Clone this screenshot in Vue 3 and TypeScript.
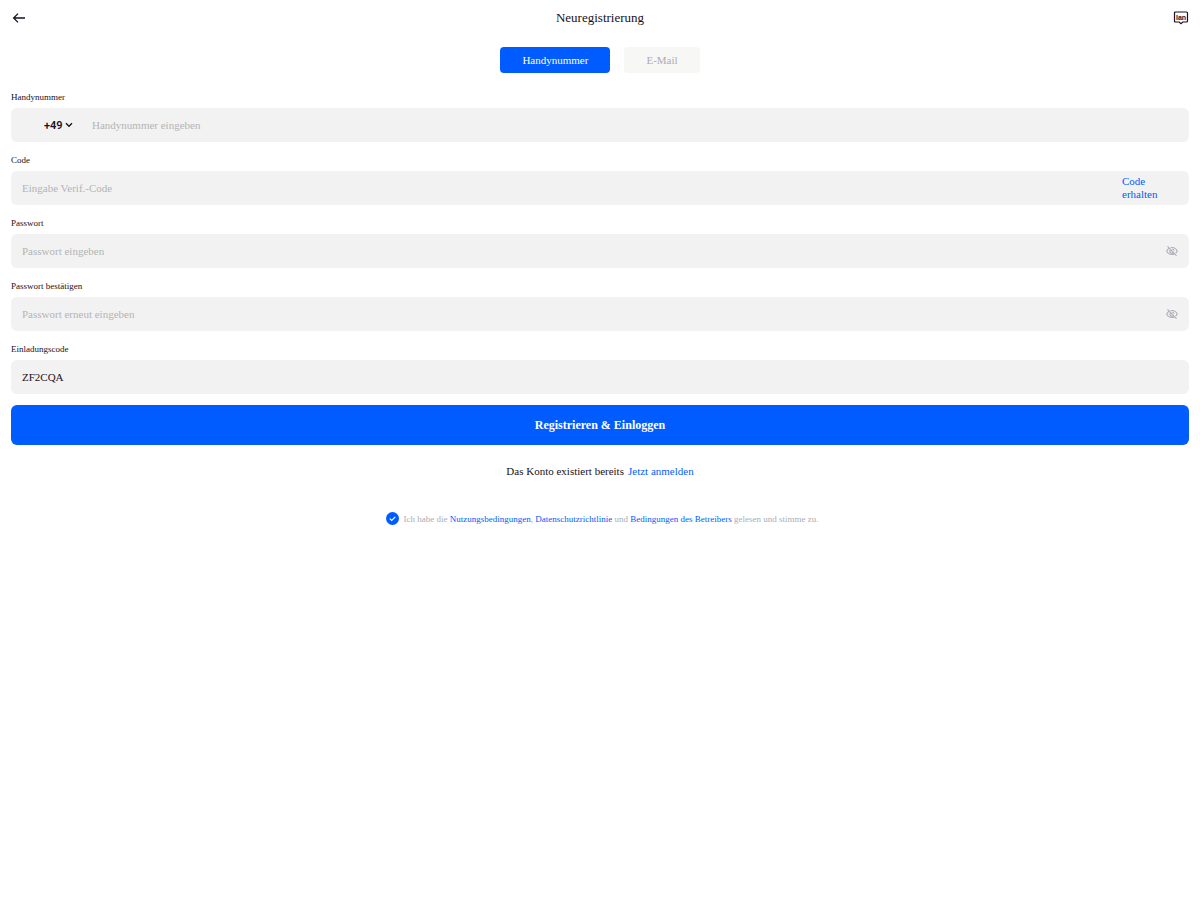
<script setup lang="ts">
import { ref } from 'vue'

const method = ref<'phone' | 'mail'>('phone')
const dialCode = ref('+49')
const phone = ref('')
const code = ref('')
const invite = ref('ZF2CQA')
const accepted = ref(true)

interface PasswordField {
  id: string
  label: string
  placeholder: string
  value: string
  visible: boolean
}

const passwords = ref<PasswordField[]>([
  { id: 'password', label: 'Passwort', placeholder: 'Passwort eingeben', value: '', visible: false },
  { id: 'confirm', label: 'Passwort bestätigen', placeholder: 'Passwort erneut eingeben', value: '', visible: false },
])
</script>

<template>
  <div class="page">
    <header class="bar">
      <button class="icon-button" type="button" aria-label="Zurück">
        <svg width="14" height="14" viewBox="0 0 14 14" fill="none" stroke="#1b1020" stroke-width="1.3">
          <path d="M13 7H1.8M6 2.6 1.6 7 6 11.4" />
        </svg>
      </button>
      <h1 class="title">Neuregistrierung</h1>
      <button class="icon-button" type="button" aria-label="Sprache">
        <svg width="16" height="14" viewBox="0 0 16 14">
          <path d="M2.500 1h11q1 0 1 1v8q0 1-1 1H9.800L8 12.700 6.200 11H2.500q-1 0-1-1V2q0-1 1-1z" fill="none" stroke="#1b1020" stroke-width="1.200" />
          <text class="glyph" x="8" y="8.600" text-anchor="middle">lan</text>
        </svg>
      </button>
    </header>

    <nav class="tabs">
      <button class="tab" :class="{ active: method === 'phone' }" type="button" @click="method = 'phone'">Handynummer</button>
      <button class="tab" :class="{ active: method === 'mail' }" type="button" @click="method = 'mail'">E-Mail</button>
    </nav>

    <form class="form" @submit.prevent>
      <div class="field">
        <label class="label" for="phone">Handynummer</label>
        <div class="box phone-box">
          <div class="dial">
            <select v-model="dialCode" class="dial-select" aria-label="Ländervorwahl">
              <option>+49</option>
            </select>
            <svg class="chevron" width="8" height="6" viewBox="0 0 8 6" fill="none" stroke="#1b1020" stroke-width="1.3">
              <path d="M1 1.3 4 4.3 7 1.3" />
            </svg>
          </div>
          <input id="phone" v-model="phone" class="input" type="tel" placeholder="Handynummer eingeben" />
        </div>
      </div>

      <div class="field">
        <label class="label" for="code">Code</label>
        <div class="box">
          <input id="code" v-model="code" class="input" type="text" placeholder="Eingabe Verif.-Code" />
          <button class="send" type="button">Code erhalten</button>
        </div>
      </div>

      <div v-for="field in passwords" :key="field.id" class="field">
        <label class="label" :for="field.id">{{ field.label }}</label>
        <div class="box">
          <input :id="field.id" v-model="field.value" class="input" :type="field.visible ? 'text' : 'password'" :placeholder="field.placeholder" />
          <button class="eye" type="button" aria-label="Passwort anzeigen" @click="field.visible = !field.visible">
            <svg width="12" height="12" viewBox="0 0 12 12" fill="none" stroke="#acafb5" stroke-width="1.1">
              <path d="M3.2 3.3C2 4 1.2 5 .7 6c1 2 3 3.5 5.3 3.5.9 0 1.7-.2 2.4-.5M4.6 2.7C5 2.6 5.5 2.5 6 2.5 8.3 2.5 10.3 4 11.3 6c-.4.8-.9 1.5-1.6 2.1" />
              <path d="M4.5 4.6a2 2 0 0 0 2.9 2.9M6.2 4a2 2 0 0 1 1.8 1.8M1.5 1.3l9 9.4" />
            </svg>
          </button>
        </div>
      </div>

      <div class="field">
        <label class="label" for="invite">Einladungscode</label>
        <div class="box">
          <input id="invite" v-model="invite" class="input" type="text" />
        </div>
      </div>

      <button class="submit" type="submit">Registrieren &amp; Einloggen</button>

      <p class="login"><span>Das Konto existiert bereits</span><a href="#">Jetzt anmelden</a></p>

      <div class="terms">
        <span class="check">
          <input id="terms" v-model="accepted" class="check-input" type="checkbox" />
          <svg class="check-mark" width="13" height="13" viewBox="0 0 13 13" fill="none" stroke="#fff" stroke-width="1.2">
            <path d="M3.8 6.6 5.7 8.4 9.3 4.8" />
          </svg>
        </span>
        <label for="terms">Ich habe die <a href="#">Nutzungsbedingungen</a>, <a href="#">Datenschutzrichtlinie</a> und <a href="#">Bedingungen des Betreibers</a> gelesen und stimme zu.</label>
      </div>
    </form>
  </div>
</template>

<style>
body {
  margin: 0;
  background: #fff;
}
</style>

<style scoped>
.page {
  padding: 0 11px;
  font-family: "Liberation Serif", "Times New Roman", serif;
  color: #1b1020;
}

button,
input,
select {
  margin: 0;
  padding: 0;
  border: 0;
  background: none;
  font: inherit;
  color: inherit;
}

button {
  cursor: pointer;
}

a {
  color: #005cff;
  text-decoration: none;
}

.bar {
  display: flex;
  align-items: center;
  justify-content: space-between;
  height: 36px;
}

.icon-button {
  display: flex;
  align-items: center;
  justify-content: center;
  width: 16px;
  height: 16px;
}

.glyph {
  font: 700 7px "Liberation Sans", sans-serif;
  fill: #1b1020;
}

.title {
  margin: 0;
  font-size: 13px;
  line-height: 16px;
  font-weight: 400;
}

.tabs {
  display: flex;
  justify-content: center;
  gap: 14px;
  margin-top: 11px;
}

.tab {
  height: 26px;
  padding: 0 22px;
  border-radius: 4px;
  background: #f7f7f6;
  font-size: 11px;
  color: #a9adb5;
}

.tab.active {
  background: #005cff;
  color: #fff;
}

.form {
  display: flex;
  flex-direction: column;
  margin-top: 18px;
}

.field {
  display: flex;
  flex-direction: column;
  gap: 4px;
}

.field + .field {
  margin-top: 12px;
}

.label {
  font-size: 9px;
  line-height: 13px;
}

.box {
  display: flex;
  align-items: center;
  height: 34px;
  padding: 0 11px;
  border-radius: 6px;
  background: #f2f2f2;
  font-size: 11px;
}

.phone-box {
  gap: 19px;
}

.dial {
  display: flex;
  align-items: center;
  gap: 2px;
  padding-left: 22px;
}

.dial-select {
  appearance: none;
  width: 19px;
  font: 600 11px Roboto, sans-serif;
}

.input {
  flex: 1;
  min-width: 0;
  height: 100%;
  outline: none;
}

.input::placeholder {
  color: #b4b4b4;
  opacity: 1;
}

.send {
  width: 56px;
  line-height: 13px;
  text-align: left;
  color: #005cff;
}

.eye {
  display: flex;
}

.submit {
  height: 40px;
  margin-top: 11px;
  border-radius: 6px;
  background: #005cff;
  font-size: 12px;
  font-weight: 700;
  color: #fff;
}

.login {
  display: flex;
  justify-content: center;
  gap: 4px;
  margin: 19px 0 0;
  font-size: 11px;
  line-height: 14px;
}

.terms {
  display: flex;
  align-items: center;
  justify-content: center;
  gap: 5px;
  margin-top: 34px;
  padding-left: 4px;
  font-size: 9px;
  color: #a9adb5;
}

.check {
  position: relative;
  display: flex;
}

.check-input {
  appearance: none;
  width: 13px;
  height: 13px;
  border-radius: 50%;
  background: #c5c8ce;
}

.check-input:checked {
  background: #005cff;
}

.check-mark {
  position: absolute;
  inset: 0;
  pointer-events: none;
}
</style>
